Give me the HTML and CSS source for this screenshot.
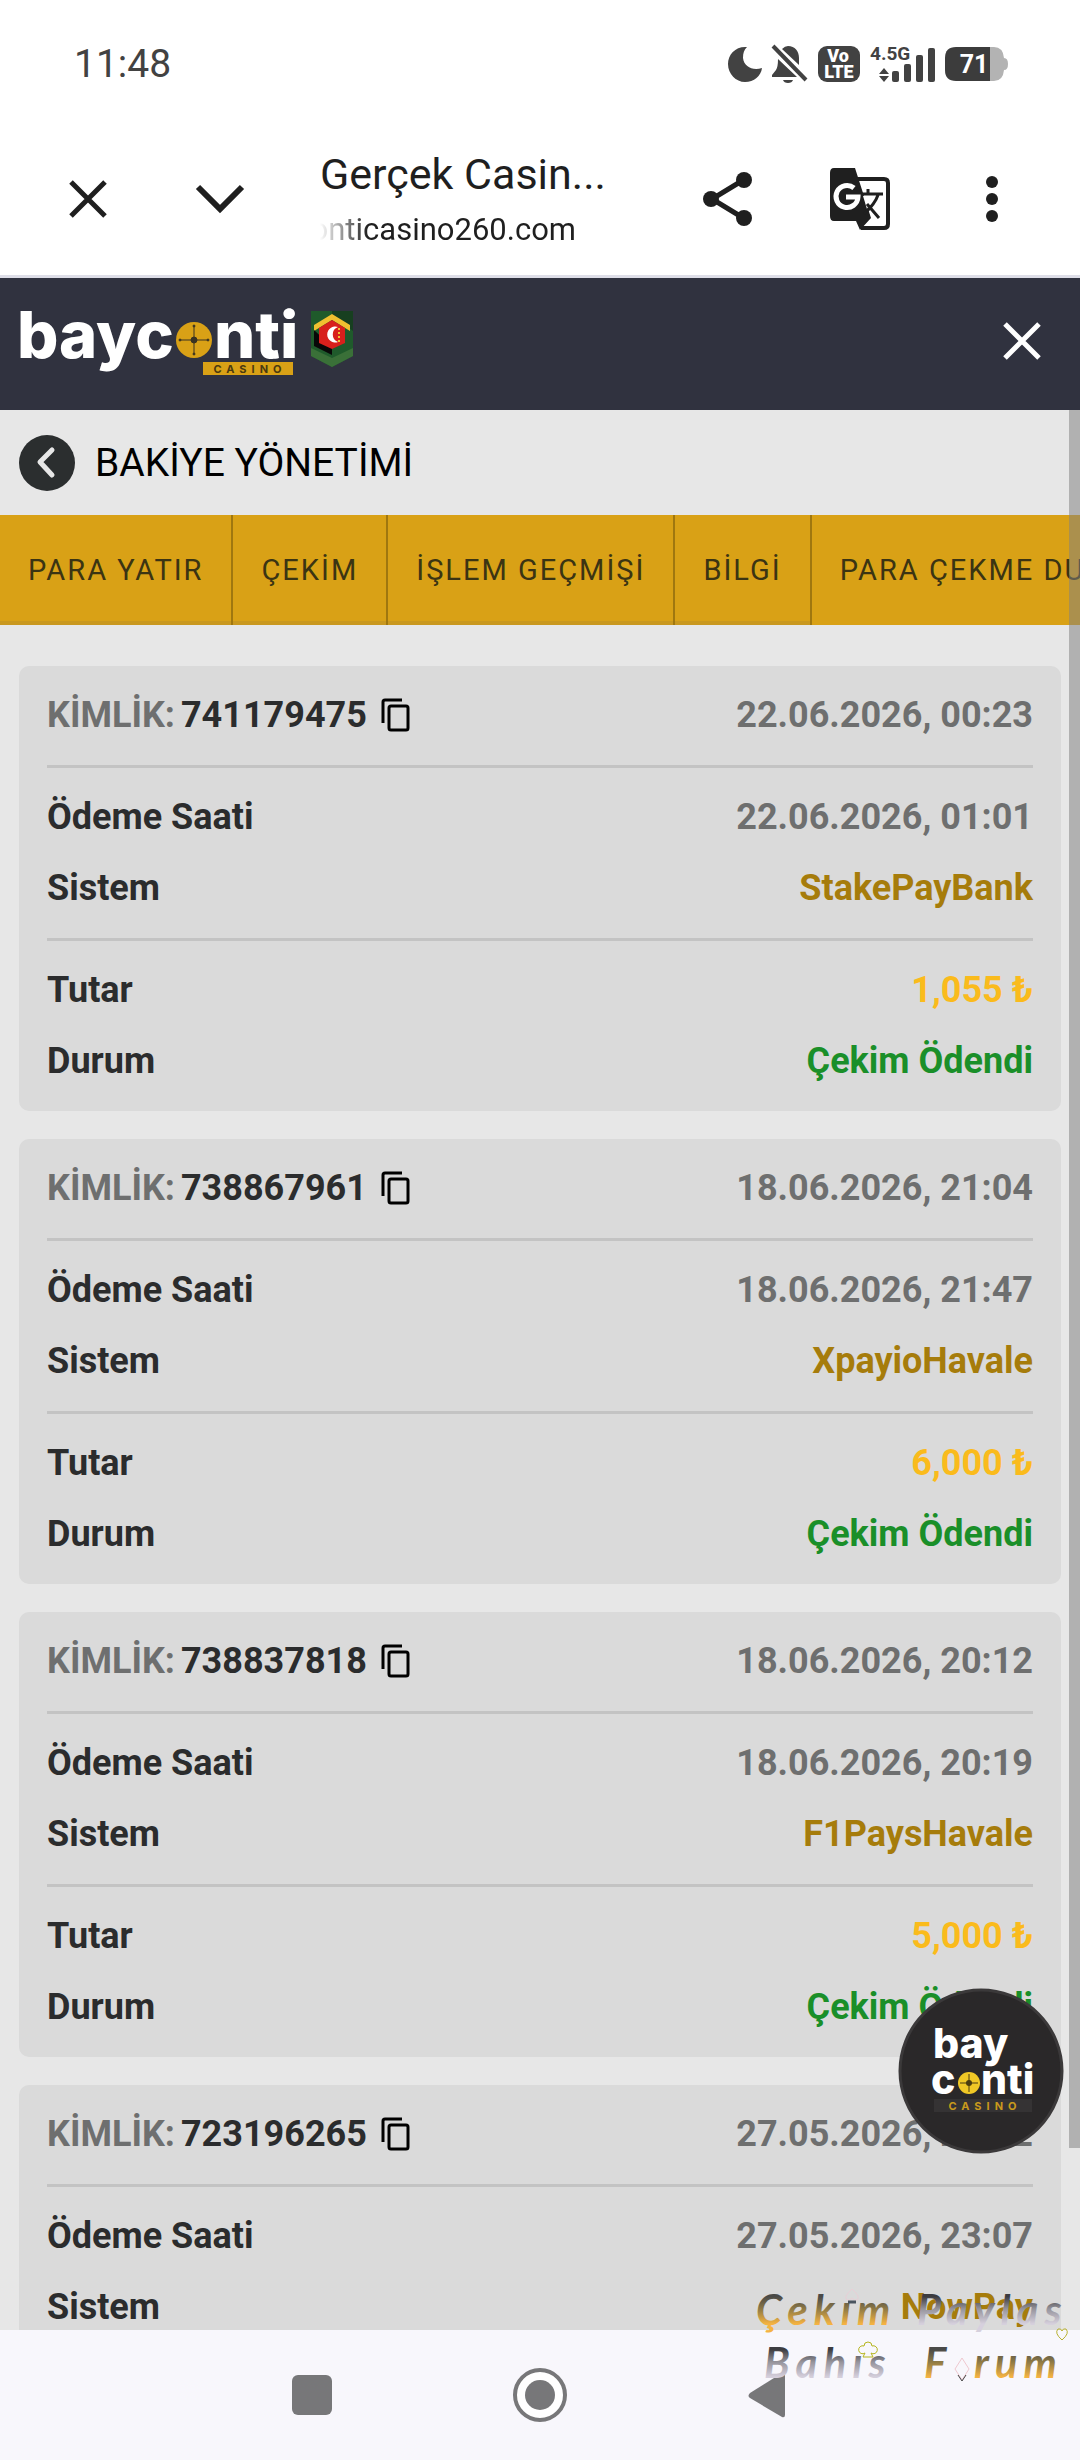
FILE: index.html
```html
<!DOCTYPE html>
<html lang="tr">
<head>
    <meta charset="UTF-8">
    <meta name="viewport" content="width=device-width, initial-scale=1.0">
    <title>Gerçek Casino</title>
    <link rel="stylesheet" href="styles.css">
</head>
<body>
    <!-- Icon used in every card -->
    <svg class="defs" width="0" height="0">
        <symbol id="copy" viewBox="0 0 29 34">
            <path d="M2 25V4q0-2 2-2h17" fill="none" stroke="#000" stroke-width="3"/>
            <rect x="8" y="8" width="19" height="24" rx="2" fill="none" stroke="#000" stroke-width="3"/>
        </symbol>
    </svg>

    <div class="status-bar">
        <span class="clock">11:48</span>
        <div class="status-icons">
            <svg width="35" height="38" viewBox="0 0 35 38">
                <path d="M19 2C8 1 0 9 0 19s8 18 17 18c9 0 16-6 17-14-9 3-18-1-19-10 0-5 1-8 4-11z" fill="#424242"/>
            </svg>
            <svg width="36" height="40" viewBox="0 0 36 40">
                <path d="M10 5q3-3 6-3c7 0 11 5 11 12v7zM6 15l19 18H0v-2l4-5q2-3 2-11zM11 36h10q-1 3-5 3t-5-3z" fill="#424242"/>
                <path d="M1 2l33 34" stroke="#424242" stroke-width="4"/>
            </svg>
            <svg width="44" height="38" viewBox="0 0 44 38">
                <rect x="1" y="1" width="42" height="36" rx="9" fill="#424242"/>
                <g fill="#fff" font-family="Roboto" font-weight="900" font-size="18">
                    <text x="21" y="17" text-anchor="middle">Vo</text>
                    <text x="22" y="33" text-anchor="middle">LTE</text>
                </g>
            </svg>
            <svg width="66" height="38" viewBox="0 0 66 38">
                <text x="0" y="15" fill="#424242" font-family="Roboto" font-weight="700" font-size="19">4.5G</text>
                <path d="M9 29l5-6 5 6zM9 31h10l-5 6z" fill="#424242"/>
                <rect x="22" y="26" width="7" height="11" rx="2" fill="#424242"/>
                <rect x="34" y="19" width="7" height="18" rx="2" fill="#424242"/>
                <rect x="46" y="10" width="7" height="27" rx="2" fill="#424242"/>
                <rect x="58" y="3" width="7" height="34" rx="2" fill="#424242"/>
            </svg>
            <svg width="64" height="34" viewBox="0 0 64 34">
                <path d="M45 0h4q9 0 10 11 4 0 4 6t-4 6q-1 11-10 11h-4z" fill="#b3b3b3"/>
                <path d="M45 0v34H11Q0 34 0 23V11Q0 0 11 0z" fill="#3c3c3c"/>
                <text x="29" y="26" fill="#fff" font-family="Roboto" font-weight="700" font-size="25" text-anchor="middle">71</text>
            </svg>
        </div>
    </div>

    <div class="toolbar">
        <button class="icon-btn" aria-label="Kapat">
            <svg width="40" height="40" viewBox="0 0 40 40"><path d="M3 3l34 34M37 3L3 37" stroke="#1f1f1f" stroke-width="5"/></svg>
        </button>
        <button class="icon-btn" aria-label="Küçült">
            <svg width="50" height="40" viewBox="0 0 50 40"><path d="M3 8l22 22L47 8" fill="none" stroke="#1f1f1f" stroke-width="6"/></svg>
        </button>
        <div class="page-info">
            <div class="page-title">Gerçek Casin...</div>
            <div class="page-url"><span>onticasino260.com</span></div>
        </div>
        <button class="icon-btn" aria-label="Paylaş">
            <svg width="52" height="58" viewBox="0 0 52 58">
                <path d="M43 9L10 29l33 20" fill="none" stroke="#1f1f1f" stroke-width="5"/>
                <circle cx="9" cy="29" r="8" fill="#1f1f1f"/>
                <circle cx="42" cy="10" r="8" fill="#1f1f1f"/>
                <circle cx="42" cy="48" r="8" fill="#1f1f1f"/>
            </svg>
        </button>
        <button class="icon-btn" aria-label="Çevir">
            <svg width="62" height="62" viewBox="0 0 62 62">
                <path d="M28 11h27q4 0 4 4v41q0 4-4 4H32" fill="none" stroke="#1f1f1f" stroke-width="4"/>
                <path d="M5 0h21l16 50-11 12-4-9H5q-4 0-4-5V5q0-5 4-5z" fill="#1f1f1f"/>
                <path d="M34 28h10l-6 13z" fill="#fff"/>
                <path d="M32 26h22M39 21v5M49 27q-3 9-14 19M38 36l12 14" fill="none" stroke="#1f1f1f" stroke-width="3"/>
                <path d="M25 20a11 11 0 1 0 4 9H17" fill="none" stroke="#fff" stroke-width="5"/>
            </svg>
        </button>
        <button class="icon-btn" aria-label="Menü">
            <svg width="12" height="48" viewBox="0 0 12 48" fill="#1f1f1f">
                <circle cx="6" cy="7" r="6"/><circle cx="6" cy="24" r="6"/><circle cx="6" cy="41" r="6"/>
            </svg>
        </button>
    </div>

    <header class="site-header">
        <a class="logo" href="#" aria-label="bayconti casino">
            <svg width="336" height="76" viewBox="0 0 336 76">
                <g fill="#fff" font-family="Inter" font-weight="800" font-size="65">
                    <text x="-2" y="55">bayc</text>
                    <text x="195" y="55">nti</text>
                </g>
                <circle cx="175" cy="37" r="18" fill="#d9a116"/>
                <g fill="#3a3322" stroke="#3a3322">
                    <path d="M161 37h28M175 23v28" stroke-width="1"/>
                    <circle cx="175" cy="37" r="3"/>
                    <circle cx="161" cy="37" r="1"/><circle cx="189" cy="37" r="1"/>
                    <circle cx="175" cy="23" r="1"/><circle cx="175" cy="51" r="1"/>
                </g>
                <rect x="184" y="59" width="90" height="13" fill="#d9a116"/>
                <text class="logo-sub" x="231" y="70" fill="#4b3a10" text-anchor="middle">CASINO</text>
                <path d="M292 8h42v45l-21 11-21-11z" fill="#1f5a2b"/>
                <path d="M313 8h21v20l-21-16z" fill="#173f20"/>
                <path d="M295 22l18-11 18 11v6l-18-11-18 11z" fill="#f0c030"/>
                <path d="M295 27v16l18 9v-8z" fill="#080808"/>
                <path d="M292 45l21 10 21-10v8l-21 11-21-11z" fill="#3a7038"/>
                <path d="M313 17l13 8v15l-13 6-13-6V25z" fill="#d8201c"/>
                <path d="M319 24a8 8 0 1 0 0 15 8 8 0 0 1 0-15z" fill="#fff"/>
                <path d="M320 25v14" stroke="#f0c030" stroke-width="2" stroke-dasharray="2 2"/>
            </svg>
        </a>
        <button class="icon-btn" aria-label="Menüyü kapat">
            <svg width="40" height="40" viewBox="0 0 40 40"><path d="M3 3l34 34M37 3L3 37" stroke="#fff" stroke-width="5"/></svg>
        </button>
    </header>

    <main class="content">
        <div class="title-row">
            <button class="back-btn" aria-label="Geri">
                <svg width="56" height="56" viewBox="0 0 56 56">
                    <circle cx="28" cy="28" r="28" fill="#2b2e2f"/>
                    <path d="M33 15L21 27l12 13" fill="none" stroke="#e7e7e7" stroke-width="5" stroke-linecap="round" stroke-linejoin="round"/>
                </svg>
            </button>
            <h1>BAKİYE YÖNETİMİ</h1>
        </div>

        <nav class="tabs">
            <a href="#">PARA YATIR</a>
            <a href="#">ÇEKİM</a>
            <a href="#">İŞLEM GEÇMİŞİ</a>
            <a href="#">BİLGİ</a>
            <a href="#">PARA ÇEKME DURUMU</a>
        </nav>

        <div class="cards">
            <article class="card">
                <section>
                    <div class="row">
                        <span class="card-id"><span class="muted">KİMLİK:</span> 741179475
                            <button class="icon-btn" aria-label="Kopyala"><svg width="29" height="34"><use href="#copy"/></svg></button>
                        </span>
                        <span class="muted">22.06.2026, 00:23</span>
                    </div>
                </section>
                <section>
                    <div class="row"><span>Ödeme Saati</span><span class="muted">22.06.2026, 01:01</span></div>
                    <div class="row"><span>Sistem</span><span class="system">StakePayBank</span></div>
                </section>
                <section>
                    <div class="row"><span>Tutar</span><span class="amount">1,055 ₺</span></div>
                    <div class="row"><span>Durum</span><span class="paid">Çekim Ödendi</span></div>
                </section>
            </article>

            <article class="card">
                <section>
                    <div class="row">
                        <span class="card-id"><span class="muted">KİMLİK:</span> 738867961
                            <button class="icon-btn" aria-label="Kopyala"><svg width="29" height="34"><use href="#copy"/></svg></button>
                        </span>
                        <span class="muted">18.06.2026, 21:04</span>
                    </div>
                </section>
                <section>
                    <div class="row"><span>Ödeme Saati</span><span class="muted">18.06.2026, 21:47</span></div>
                    <div class="row"><span>Sistem</span><span class="system">XpayioHavale</span></div>
                </section>
                <section>
                    <div class="row"><span>Tutar</span><span class="amount">6,000 ₺</span></div>
                    <div class="row"><span>Durum</span><span class="paid">Çekim Ödendi</span></div>
                </section>
            </article>

            <article class="card">
                <section>
                    <div class="row">
                        <span class="card-id"><span class="muted">KİMLİK:</span> 738837818
                            <button class="icon-btn" aria-label="Kopyala"><svg width="29" height="34"><use href="#copy"/></svg></button>
                        </span>
                        <span class="muted">18.06.2026, 20:12</span>
                    </div>
                </section>
                <section>
                    <div class="row"><span>Ödeme Saati</span><span class="muted">18.06.2026, 20:19</span></div>
                    <div class="row"><span>Sistem</span><span class="system">F1PaysHavale</span></div>
                </section>
                <section>
                    <div class="row"><span>Tutar</span><span class="amount">5,000 ₺</span></div>
                    <div class="row"><span>Durum</span><span class="paid">Çekim Ödendi</span></div>
                </section>
            </article>

            <article class="card">
                <section>
                    <div class="row">
                        <span class="card-id"><span class="muted">KİMLİK:</span> 723196265
                            <button class="icon-btn" aria-label="Kopyala"><svg width="29" height="34"><use href="#copy"/></svg></button>
                        </span>
                        <span class="muted">27.05.2026, 22:42</span>
                    </div>
                </section>
                <section>
                    <div class="row"><span>Ödeme Saati</span><span class="muted">27.05.2026, 23:07</span></div>
                    <div class="row"><span>Sistem</span><span class="system">NowPay</span></div>
                </section>
            </article>
        </div>

        <div class="scroll-thumb"></div>

        <!-- Floating round logo -->
        <a class="float-logo" href="#" aria-label="bayconti">
            <svg width="165" height="165" viewBox="0 0 165 165">
                <circle cx="82" cy="82" r="81" fill="#2a2829" stroke="#3b393a" stroke-width="3"/>
                <g fill="#fff" font-family="Inter" font-weight="800" font-size="41">
                    <text x="34" y="69">bay</text>
                    <text x="32" y="105">c</text>
                    <text x="82" y="105">nti</text>
                </g>
                <circle cx="70" cy="94" r="11" fill="#f0c826"/>
                <path d="M61 94h18M70 85v18" stroke="#4a3c10" stroke-width="1"/>
                <circle cx="70" cy="94" r="3" fill="#4a3c10"/>
                <rect x="35" y="110" width="98" height="13" fill="#353334"/>
                <text class="logo-sub" x="86" y="121" fill="#c99a1c" text-anchor="middle">CASINO</text>
            </svg>
        </a>
    </main>

    <nav class="system-nav">
        <button class="icon-btn" aria-label="Son uygulamalar">
            <svg width="56" height="56" viewBox="0 0 56 56"><rect x="8" y="8" width="40" height="40" rx="6" fill="#777779"/></svg>
        </button>
        <button class="icon-btn" aria-label="Ana ekran">
            <svg width="56" height="56" viewBox="0 0 56 56">
                <circle cx="28" cy="28" r="25" fill="#fff" stroke="#777779" stroke-width="4"/>
                <circle cx="28" cy="28" r="15" fill="#777779"/>
            </svg>
        </button>
        <button class="icon-btn" aria-label="Geri">
            <svg width="56" height="56" viewBox="0 0 56 56"><path d="M10 26L42 6q3-1 3 2v40q0 3-3 2L10 31q-3-2 0-5z" fill="#777779"/></svg>
        </button>
    </nav>

    <!-- Forum stamp lying over the bottom corner -->
    <svg class="stamp" width="330" height="110" viewBox="0 0 330 110">
        <defs>
            <linearGradient id="gold" x1="0" y1="0" x2="0" y2="1">
                <stop offset="0.25" stop-color="#4a4a48"/><stop offset="0.5" stop-color="#8f7a45"/><stop offset="0.8" stop-color="#f5b342"/>
            </linearGradient>
            <linearGradient id="silver" x1="0" y1="0" x2="0" y2="1">
                <stop offset="0.25" stop-color="#3c3c40"/><stop offset="0.5" stop-color="#96949c"/><stop offset="0.8" stop-color="#d6d0dd"/>
            </linearGradient>
        </defs>
        <text x="6" y="47" fill="url(#gold)">Çekım</text>
        <text x="167" y="47" fill="url(#silver)">Paylas</text>
        <text x="14" y="100" fill="url(#silver)">Bahıs</text>
        <text x="174" y="100" fill="url(#gold)">F</text>
        <text x="224" y="100" fill="url(#gold)">rum</text>
        <g fill="none" stroke-width="1">
            <path d="M102 11q-9 8-5 11 3 1 5-2 2 3 5 2 4-3-5-11z" stroke="#e8cfd6"/>
            <path d="M98 24h8" stroke="#4a5560" stroke-width="3"/>
            <path d="M312 62q-8-7-4-11 3-1 4 2 1-3 4-2 4 4-4 11z" stroke="#b8b030"/>
            <path d="M115 75a4 4 0 1 1-1-7 4 4 0 1 1 8 0 4 4 0 1 1-1 7l2 4h-10z" stroke="#b5b51c"/>
            <path d="M212 80l7 11-7 11-7-11z" stroke="#efc8cf"/>
            <path d="M208 97l4 6 4-6" stroke="#444"/>
        </g>
    </svg>
</body>
</html>
```

FILE: styles.css
```css
* {
    box-sizing: border-box;
}

body {
    display: flex;
    flex-direction: column;
    position: relative;
    height: 100vh;
    margin: 0;
    background: #fff;
    color: #2b2c2d;
    font-family: Roboto, sans-serif;
    overflow: hidden;
}

button {
    border: none;
    padding: 0;
    background: none;
    cursor: pointer;
}

svg {
    display: block;
    overflow: visible;
}

a {
    color: inherit;
    text-decoration: none;
}

.defs {
    position: absolute;
}

.icon-btn {
    display: flex;
    justify-content: center;
    align-items: center;
}

/* phone status bar */
.status-bar {
    display: flex;
    justify-content: space-between;
    align-items: center;
    height: 122px;
    padding: 6px 71px 0 74px;
    flex: none;
}

.clock {
    color: #424242;
    font-size: 39px;
}

.status-icons {
    display: flex;
    align-items: center;
    gap: 9px;
}

/* browser toolbar */
.toolbar {
    display: flex;
    align-items: center;
    height: 156px;
    padding: 0 22px;
    border-bottom: 3px solid #dedee8;
    flex: none;
}

.toolbar .icon-btn {
    width: 132px;
    height: 132px;
}

.page-info {
    flex: 1;
    padding: 6px 0 0 34px;
    white-space: nowrap;
    color: #1f1f1f;
}

.page-title {
    font-size: 43px;
    line-height: 56px;
}

.page-url {
    display: flex;
    justify-content: flex-end;
    width: 256px;
    font-size: 31px;
    line-height: 56px;
    overflow: hidden;
    -webkit-mask-image: linear-gradient(to right, transparent, #000 48px);
    mask-image: linear-gradient(to right, transparent, #000 48px);
}

/* site header */
.site-header {
    display: flex;
    justify-content: space-between;
    align-items: center;
    height: 132px;
    padding: 0 38px 6px 19px;
    background: #30323f;
    flex: none;
}

.logo-sub {
    font-family: Inter, sans-serif;
    font-size: 11px;
    font-weight: 700;
    letter-spacing: 5px;
}

.content {
    position: relative;
    flex: 1;
    min-height: 0;
    background: #e7e7e7;
    overflow: hidden;
}

.title-row {
    display: flex;
    align-items: center;
    gap: 20px;
    height: 105px;
    padding: 0 19px;
}

.title-row h1 {
    margin: 0;
    color: #000;
    font-size: 39px;
    font-weight: 400;
}

.tabs {
    display: flex;
    height: 110px;
    background: #d9a116;
    overflow: hidden;
}

.tabs a {
    display: flex;
    align-items: center;
    padding: 0 28px;
    border-right: 2px solid #a0770f;
    color: #3b3413;
    font-size: 29px;
    letter-spacing: 2px;
    white-space: nowrap;
    box-shadow: inset 0 -4px #c9981f;
}

.tabs a:last-child {
    box-shadow: none;
}

/* transaction cards */
.cards {
    display: flex;
    flex-direction: column;
    gap: 28px;
    padding: 41px 19px;
}

.card {
    padding: 0 28px;
    border-radius: 10px;
    background: #dadada;
    font-size: 36px;
    font-weight: 700;
}

.card section {
    padding: 13px 0 15px;
}

.card section + section {
    border-top: 3px solid #c3c3c3;
}

.row {
    display: flex;
    justify-content: space-between;
    align-items: center;
    height: 71px;
}

.card-id {
    display: flex;
    align-items: center;
    gap: 6px;
}

.card-id .icon-btn {
    margin-left: 8px;
}

.muted {
    color: #6e6f6f;
}

.system {
    color: #a67c0b;
}

.amount {
    color: #fabb1c;
}

.paid {
    color: #1a8f29;
}

.scroll-thumb {
    position: absolute;
    top: 0;
    right: 0;
    width: 11px;
    height: 90.5%;
    background: rgba(128, 128, 128, 0.52);
}

.float-logo {
    position: absolute;
    right: 16px;
    bottom: 176px;
}

/* phone navigation */
.system-nav {
    display: flex;
    justify-content: center;
    align-items: center;
    gap: 172px;
    height: 130px;
    background: #f8f7fc;
    flex: none;
}

.stamp {
    position: absolute;
    right: 0;
    bottom: 72px;
    font-family: Lato, sans-serif;
    font-size: 42px;
    font-style: italic;
    font-weight: 700;
    letter-spacing: 6px;
    pointer-events: none;
}
```
